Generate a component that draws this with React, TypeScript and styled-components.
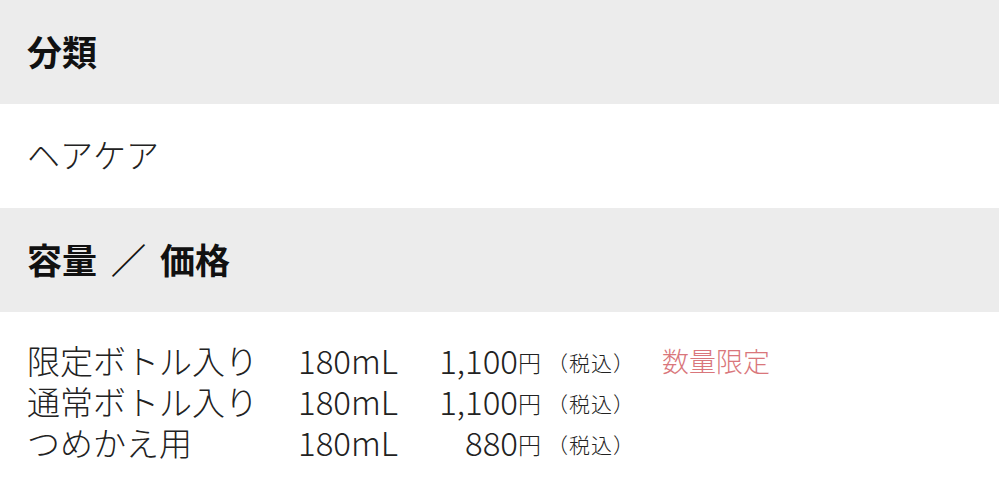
import styled, { createGlobalStyle } from "styled-components";

const GlobalStyle = createGlobalStyle`
  html, body {
    margin: 0;
    padding: 0;
    background: #ffffff;
  }
  body {
    font-family: "Noto Sans CJK JP", "Noto Sans", sans-serif;
    color: #222222;
  }
`;

interface PriceRow {
  name: string;
  volume: string;
  price: string;
  note?: string;
}

const rows: PriceRow[] = [
  { name: "限定ボトル入り", volume: "180mL", price: "1,100", note: "数量限定" },
  { name: "通常ボトル入り", volume: "180mL", price: "1,100" },
  { name: "つめかえ用", volume: "180mL", price: "880" },
];

const App = () => {
  return (
    <Page>
      <GlobalStyle />
      <HeadBar>
        <HeadTitle>分類</HeadTitle>
      </HeadBar>
      <ValueRow>ヘアケア</ValueRow>
      <HeadBar>
        <HeadTitle>容量 ／ 価格</HeadTitle>
      </HeadBar>
      <PriceTable>
        {rows.map((row) => (
          <Line key={row.name}>
            <Name>{row.name}</Name>
            <Volume>{row.volume}</Volume>
            <Price>{row.price}</Price>
            <Yen>円</Yen>
            <Tax>（税込）</Tax>
            <Note>{row.note || ""}</Note>
          </Line>
        ))}
      </PriceTable>
    </Page>
  );
};

export default App;

const Page = styled.div`
  width: 999px;
  height: 494px;
  overflow: hidden;
  display: flex;
  flex-direction: column;
`;

const HeadBar = styled.div`
  height: 104px;
  flex-shrink: 0;
  background-color: #ececec;
  display: flex;
  align-items: center;
  padding: 0 0 4px 27px;
  box-sizing: border-box;
`;

const HeadTitle = styled.h2`
  margin: 0;
  font-size: 35px;
  font-weight: 700;
  color: #111111;
  line-height: 1;
  word-spacing: 6px;
`;

const ValueRow = styled.div`
  height: 104px;
  flex-shrink: 0;
  display: flex;
  align-items: center;
  padding: 0 0 3px 27px;
  box-sizing: border-box;
  font-size: 33px;
  font-weight: 300;
  line-height: 1;
`;

const PriceTable = styled.div`
  display: grid;
  grid-template-columns: 271px 110px 110px auto auto auto;
  grid-auto-rows: 41px;
  justify-content: start;
  align-items: center;
  padding: 28px 0 0 27px;
  font-weight: 300;
  line-height: 1;
`;

const Line = styled.div`
  display: contents;
`;

const Name = styled.span`
  font-size: 33px;
  white-space: nowrap;
`;

const Volume = styled.span`
  font-size: 33px;
`;

const Price = styled.span`
  font-size: 33px;
  text-align: right;
`;

const Yen = styled.span`
  font-size: 23px;
  padding-top: 4px;
`;

const Tax = styled.span`
  font-size: 21px;
  margin-left: 6px;
  padding-top: 4px;
  letter-spacing: 1px;
  white-space: nowrap;
`;

const Note = styled.span`
  font-size: 27px;
  color: #d9767b;
  margin-left: 27px;
  white-space: nowrap;
`;
